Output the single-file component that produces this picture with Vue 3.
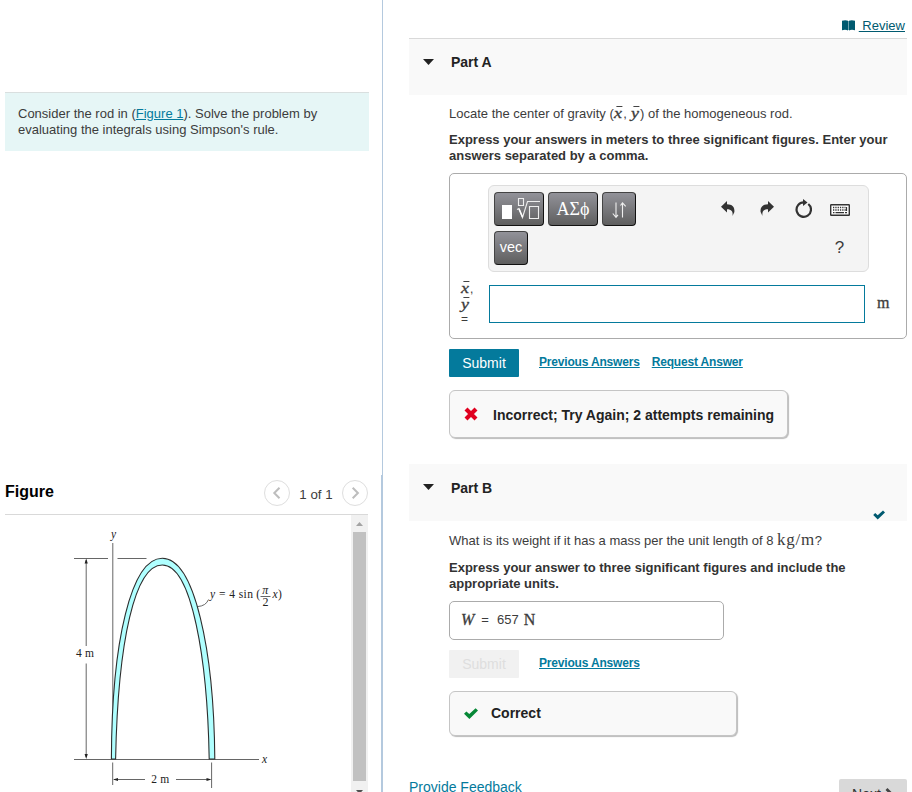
<script setup>
const tools = ['vec']
</script>

<template>
  <div class="page">
    <aside class="left">
      <div class="intro">
        <div>Consider the rod in (<a class="link">Figure 1</a>). Solve the problem by</div>
        <div class="l2">evaluating the integrals using Simpson's rule.</div>
      </div>
      <section class="figure">
        <header class="fig-head">
          <h2>Figure</h2>
          <div class="pager">
            <span class="round"><svg width="24" height="24" viewBox="0 0 24 24"><path d="M14.5 6.8 9.3 12l5.2 5.2" /></svg></span>
            <span class="count">1 of 1</span>
            <span class="round"><svg width="24" height="24" viewBox="0 0 24 24"><path d="M9.7 6.8 14.9 12l-5.2 5.2" /></svg></span>
          </div>
        </header>
        <div class="fig-body">
          <svg class="plot" width="346" height="277" viewBox="5 515 346 277">
            <g class="axis">
              <path d="M112.8 543V759M74 759.5H259" />
              <path d="M74 558.5H108M117.5 558.5H146.5" />
              <path d="M86.2 560V646M86.2 663.5V757" />
              <path d="M112.7 762.5V785M211.6 762.5V788" />
              <path d="M114 779.5H145M176 779.5H210" />
              <path d="M197.5 606.6Q206 606 208.5 599.5" />
            </g>
            <path class="rod" d="M111.4 759C111.7 640 131.5 558.3 162.3 558.3C194.5 558.3 214 650 214.8 759H209.2C207.5 660 192 565 162.3 565C135 565 118 640 115.6 759Z" />
            <g class="arrow">
              <path d="M86.2 558.5l-1.6 5h3.2zM86.2 759l-1.6-5h3.2zM113 779.5l5-1.6v3.2zM211.5 779.5l-5-1.6v3.2z" />
            </g>
            <g class="txt">
              <text x="111" y="538" class="it">y</text>
              <text x="262" y="762.5" class="it">x</text>
              <text x="76" y="657" textLength="18">4 m</text>
              <text x="151.3" y="783" textLength="18">2 m</text>
              <text x="210" y="598" class="it">y</text>
              <text x="219" y="598" textLength="34">= 4 sin</text>
              <text x="256.3" y="598">(</text>
              <text x="262.3" y="594" class="it frac">π</text>
              <text x="262.6" y="605.5" class="frac">2</text>
              <text x="272.5" y="598" class="it">x</text>
              <text x="278" y="598">)</text>
            </g>
            <path class="axis" d="M260.5 596.5H270.5" />
          </svg>
          <div class="scroll">
            <svg width="17" height="17" viewBox="0 0 17 17"><path d="M5 11h7L8.500 7z" fill="#a3a3a3" /></svg>
            <div class="thumb"></div>
            <svg width="17" height="17" viewBox="0 0 17 17"><path d="M5 9h7l-3.500 4z" fill="#505050" /></svg>
          </div>
        </div>
      </section>
    </aside>
    <div class="divider"><i></i></div>

    <main class="right">
      <div class="review">
        <svg width="13" height="11" viewBox="0 0 13 11"><path d="M0 .8C2 0 4.500 0 6 .8V10.500C4.500 9.600 2 9.600 0 10.300zM7 .8C8.500 0 11 0 13 .8V10.300C11 9.600 8.500 9.600 7 10.500z" fill="#005a70" /><path d="M6.500 1v9" stroke="#6fa3af" /></svg>
        <a>&nbsp;Review</a>
      </div>
      <header class="part top">
        <svg class="caret" width="11" height="6" viewBox="0 0 11 6"><path d="M0 0H11L5.500 6z" /></svg>
        <h3>Part A</h3>
      </header>
      <section class="content">
        <p class="q qa">Locate the center of gravity (<span class="m bar">x</span>,&nbsp;<span class="m bar ml">y</span>) of the homogeneous rod.</p>
        <p class="bold ba"><span class="b1">Express your answers in meters to three significant figures. Enter your</span><br><span class="b2">answers separated by a comma.</span></p>
        <div class="answer">
          <div class="vars">
            <div><span class="m bar">x</span>,</div>
            <div><span class="m bar">y</span></div>
            <div class="eq">=</div>
          </div>
          <div class="mid">
            <div class="toolbar">
              <div class="tool-left">
                <div class="row">
                  <span class="btn wide">
                    <svg width="48" height="32" viewBox="0 0 48 32"><rect x="7" y="12" width="10" height="14" fill="#fff" /><path d="M23.500 5.500h5v7h-5zM22 16.500l2-1 3.500 9L32.500 8.500H45M34.500 13.500h9v12h-9z" fill="none" stroke="#eee" stroke-width="1.100" /><path d="M24 16l3.500 8" stroke="#fff" stroke-width="1.500" /></svg>
                  </span>
                  <span class="btn wide greek">ΑΣϕ</span>
                  <span class="btn">
                    <svg width="32" height="32" viewBox="0 0 32 32"><path d="M13 9.500V24M9.800 20.500 13 24.300l2-2.500M19.500 24.500V10M17.500 12.500l2-2.700 3.200 3.500" fill="none" stroke="#eee" stroke-width="1.100" /></svg>
                  </span>
                </div>
                <div class="row"><span v-for="t in tools" :key="t" class="btn vec">{{ t }}</span></div>
              </div>
              <div class="tool-right">
                <svg class="ic" width="14" height="15" viewBox="0 0 14 15"><path d="M0 5.700 6 0V3.300C11 3.300 14 6 13.400 11L11.500 15C12.200 10.500 10.500 8.300 6 8.300V11.400z" fill="#333" /></svg>
                <svg class="ic" width="14" height="15" viewBox="0 0 14 15"><path d="M14 5.700 8 0V3.300C3 3.300 0 6 .6 11L2.500 15C1.800 10.500 3.500 8.300 8 8.300V11.400z" fill="#333" /></svg>
                <svg class="ic" width="17" height="19" viewBox="0 0 17 19"><path d="M13.300 5A7.200 7.200 0 1 1 9 3.400" fill="none" stroke="#333" stroke-width="2.200" /><path d="M8 0 12.500 3.500 8 7z" fill="#333" /></svg>
                <svg width="20" height="12" viewBox="0 0 20 12"><rect x=".7" y=".7" width="18.600" height="10.600" rx=".5" fill="#fff" stroke="#333" stroke-width="1.400" /><path d="M3 3.500H15.500M3 6H16" stroke="#333" stroke-width="1.300" stroke-dasharray="1.300 1" /><path d="M3 8.700h1.500M5.500 8.700h8.500M15 8.700h2M16.500 3v4" stroke="#333" stroke-width="1.200" /></svg>
                <span class="help">?</span>
              </div>
            </div>
            <div class="input"></div>
          </div>
          <span class="unit m up">m</span>
        </div>
        <div class="actions">
          <button class="submit">Submit</button>
          <a class="blink">Previous Answers</a>
          <a class="blink b">Request Answer</a>
        </div>
        <div class="feedback wrong">
          <svg width="14" height="14" viewBox="0 0 14 14"><path d="M2 2 12 12M12 2 2 12" stroke="#e0001f" stroke-width="4.200" /></svg>
          <span>Incorrect; Try Again; 2 attempts remaining</span>
        </div>
      </section>

      <header class="part second">
        <svg class="caret" width="11" height="6" viewBox="0 0 11 6"><path d="M0 0H11L5.500 6z" /></svg>
        <h3>Part B</h3>
        <svg class="done" width="12" height="10" viewBox="0 0 12 10"><path d="M.2 5 2.200 3 4.700 5.300 10 .4 12 2.400 4.700 9.600z" fill="#005a70" /></svg>
      </header>
      <section class="content">
        <p class="q qb"><span class="qt">What is its weight if it has a mass per the unit length of 8</span> <span class="m up kg">kg/m</span>?</p>
        <p class="bold bb"><span class="b3">Express your answer to three significant figures and include the</span><br><span class="b4">appropriate units.</span></p>
        <div class="result"><span class="m w">W</span><span class="e">=</span><span class="n">657</span><span class="m up nn">N</span></div>
        <div class="actions second-actions">
          <button class="submit off">Submit</button>
          <a class="blink">Previous Answers</a>
        </div>
        <div class="feedback right-answer">
          <svg width="14" height="11" viewBox="0 0 14 11"><path d="M0 5.800 2.400 3.400 5.300 6 11.600.2 14 2.600 5.400 11z" fill="#078837" /></svg>
          <span>Correct</span>
        </div>
      </section>
      <footer class="foot">
        <a>Provide Feedback</a>
        <button>Next <svg width="9" height="12" viewBox="0 0 9 12"><path d="M1.500 1 6.500 6l-5 5" fill="none" stroke="#444" stroke-width="2.800" /></svg></button>
      </footer>
    </main>
  </div>
</template>

<style>
body { margin: 0; background: #fff; }
</style>
<style scoped>
* { box-sizing: border-box; }
.page { width: 912px; height: 792px; overflow: hidden; display: flex; font: 13px/16px "Liberation Sans", Arial, sans-serif; color: #3c3c3c; background: #fff; }
h2, h3, p { margin: 0; }
a { text-decoration: underline; color: #047a9c; }
.left { width: 381px; height: 792px; padding: 92px 0 0 5px; flex: none; display: flex; flex-direction: column; }
.intro { width: 364px; height: 59px; border-top: 1px solid #d9dfdf; background: #e6f6f6; padding: 13px 0 0 13px; white-space: nowrap; }
.figure { margin-top: 322px; display: flex; flex-direction: column; flex: 1; }
.fig-head { height: 42px; width: 363px; border-bottom: 1px solid #d9d9d9; display: flex; justify-content: space-between; align-items: flex-start; }
h2 { font-size: 16px; line-height: 20px; color: #000; margin-top: 9px; }
.pager { display: flex; align-items: center; margin-top: 7px; }
.round { width: 26px; height: 26px; border: 1px solid #dedede; border-radius: 50%; display: flex; align-items: center; justify-content: center; }
.round path { fill: none; stroke: #bdbdbd; stroke-width: 2; }
.count { width: 52px; text-align: center; font-size: 13.3px; padding-top: 3px; }
.fig-body { display: flex; width: 363px; height: 277px; }
.plot { display: block; flex: none; }
.axis { fill: none; stroke: #555; stroke-width: .9; }
.rod { fill: #afffff; stroke: #2d2d2d; stroke-width: 1.1; }
.arrow { fill: #222; }
.txt { font: 11.5px "Liberation Serif", serif; fill: #222; }
.it { font-style: italic; }
.frac { font-size: 12px; }
.scroll { width: 17px; height: 283px; background: #f1f1f1; flex: none; display: flex; flex-direction: column; align-items: center; }
.scroll svg { flex: none; }
.thumb { width: 13px; height: 249px; background: #c1c1c1; flex: none; }
.divider { width: 2px; flex: none; background: #b4c9de; }
.divider i { display: block; width: 1px; height: 475px; background: #fff; }
.right { width: 498px; margin-left: 26px; flex: none; display: flex; flex-direction: column; }
.review { height: 38px; flex: none; display: flex; justify-content: flex-end; align-items: center; gap: 4px; padding: 13px 2px 0 0; }
.review a { color: #005a70; }
.part { height: 56px; flex: none; background: #f9f9f9; display: flex; padding: 0 22px 0 14px; }
.part.top { height: 57px; border-top: 1px solid #d9d9d9; }
.caret { margin-top: 20px; fill: #222; }
h3 { font-size: 14px; line-height: 18px; margin: 14px 0 0 17px; color: #222; }
.second { margin-top: 26px; height: 57px; }
.second h3 { margin-top: 15px; }
.done { margin-left: auto; align-self: flex-end; margin-bottom: 1px; }
.content { margin-left: 40px; width: 458px; flex: none; display: flex; flex-direction: column; }
p { white-space: nowrap; }
.m { font-family: "Liberation Serif", serif; font-style: italic; font-size: 16px; line-height: 14px; -webkit-text-stroke: .3px; }
.up { font-style: normal; }
.bar { display: inline-block; position: relative; width: 8px; margin-right: 1px; font-size: 15px; transform: scaleX(1.2); transform-origin: left; }
.bar::before { content: ""; position: absolute; left: 2px; top: 0; width: 5px; height: 1px; background: #444; }
.q { height: 16px; margin-top: 11px; }
.qa .bar { margin-left: .5px; }
.qb { margin-top: 12px; }
.kg { font-size: 17px; letter-spacing: .7px; -webkit-text-stroke: 0; }
.bold { font-weight: bold; height: 32px; color: #333; }
.ba { margin-top: 10px; }
.answer { height: 166px; width: 458px; margin-top: 9px; border: 1px solid #ababab; border-radius: 5px; display: flex; }
.vars { width: 38px; padding: 107px 0 0 11px; flex: none; font-size: 12px; }
.vars div { height: 16px; line-height: 16px; }
.vars .eq { line-height: 13px; }
.mid { width: 381px; flex: none; padding-top: 11px; }
.toolbar { height: 87px; background: #f4f4f4; border: 1px solid #ddd; border-radius: 6px; display: flex; justify-content: space-between; padding: 6px 18px 0 5px; }
.tool-left { display: flex; flex-direction: column; gap: 5px; }
.row { display: flex; gap: 4px; }
.btn { width: 34px; height: 34px; border: 1px solid #111; border-top-color: #444; border-left-color: #444; border-bottom-width: 1.5px; border-radius: 4px; background: linear-gradient(#929299, #5e5e5e); color: #fff; display: flex; align-items: center; justify-content: center; }
.wide { width: 50px; }
.greek { font: 18px "Liberation Serif", serif; }
.vec { font-size: 14.5px; padding-bottom: 2px; }
.tool-right { display: grid; grid-template-columns: 38.5px 35px 35.5px 20px; grid-template-rows: 36px 36px; align-items: center; align-content: start; }
.tool-right .ic { margin-bottom: 4px; }
.help { grid-column: 4; justify-self: center; font-size: 17px; padding: 4px 1px 0 0; }
.input { margin: 13px 0 0 1px; width: 376px; height: 38px; border: 1px solid #047a9c; background: #fff; }
.unit { margin: 122px 0 0 8px; font-size: 16px; }
.actions { display: flex; margin-top: 10px; height: 28px; }
.submit { width: 70px; height: 28px; padding: 0; border: 0; border-radius: 1px; background: #047a9c; color: #fff; font: 14px "Liberation Sans", sans-serif; }
.submit.off { background: #f1f1f1; color: #dedede; }
.blink { font-size: 12px; font-weight: bold; line-height: 16px; margin: 5px 0 0 20px; letter-spacing: -.18px; }
.blink.b { margin-left: 12px; }
.feedback { margin-top: 13px; height: 48px; width: 339px; border: 1px solid #c5c5c5; border-radius: 6px; box-shadow: 1px 1px 1px #bbb; background: #f9f9f9; display: flex; align-items: center; gap: 15px; padding-left: 14px; font-size: 14px; font-weight: bold; color: #222; white-space: nowrap; }
.wrong span { padding-top: 2px; }
.bb { margin-top: 11px; }
.result { width: 275px; height: 39px; margin-top: 9px; border: 1px solid #ababab; border-radius: 5px; display: flex; align-items: center; padding: 0 0 1px 11px; }
.e { margin-left: 7px; }
.n { margin: 0 5px 0 8px; }
.right-answer { width: 288px; height: 45px; gap: 13px; }
.right-answer span { padding-bottom: 1px; }
.foot { display: flex; justify-content: space-between; margin-top: 43px; height: 30px; flex: none; font-size: 14px; }
.foot a { text-decoration: none; }
.foot button { width: 68px; height: 30px; flex: none; border: 0; border-radius: 2px; background: #d9d9d9; color: #333; font: 14px "Liberation Sans", sans-serif; display: flex; align-items: center; justify-content: center; gap: 4px; padding: 0; }
</style>
